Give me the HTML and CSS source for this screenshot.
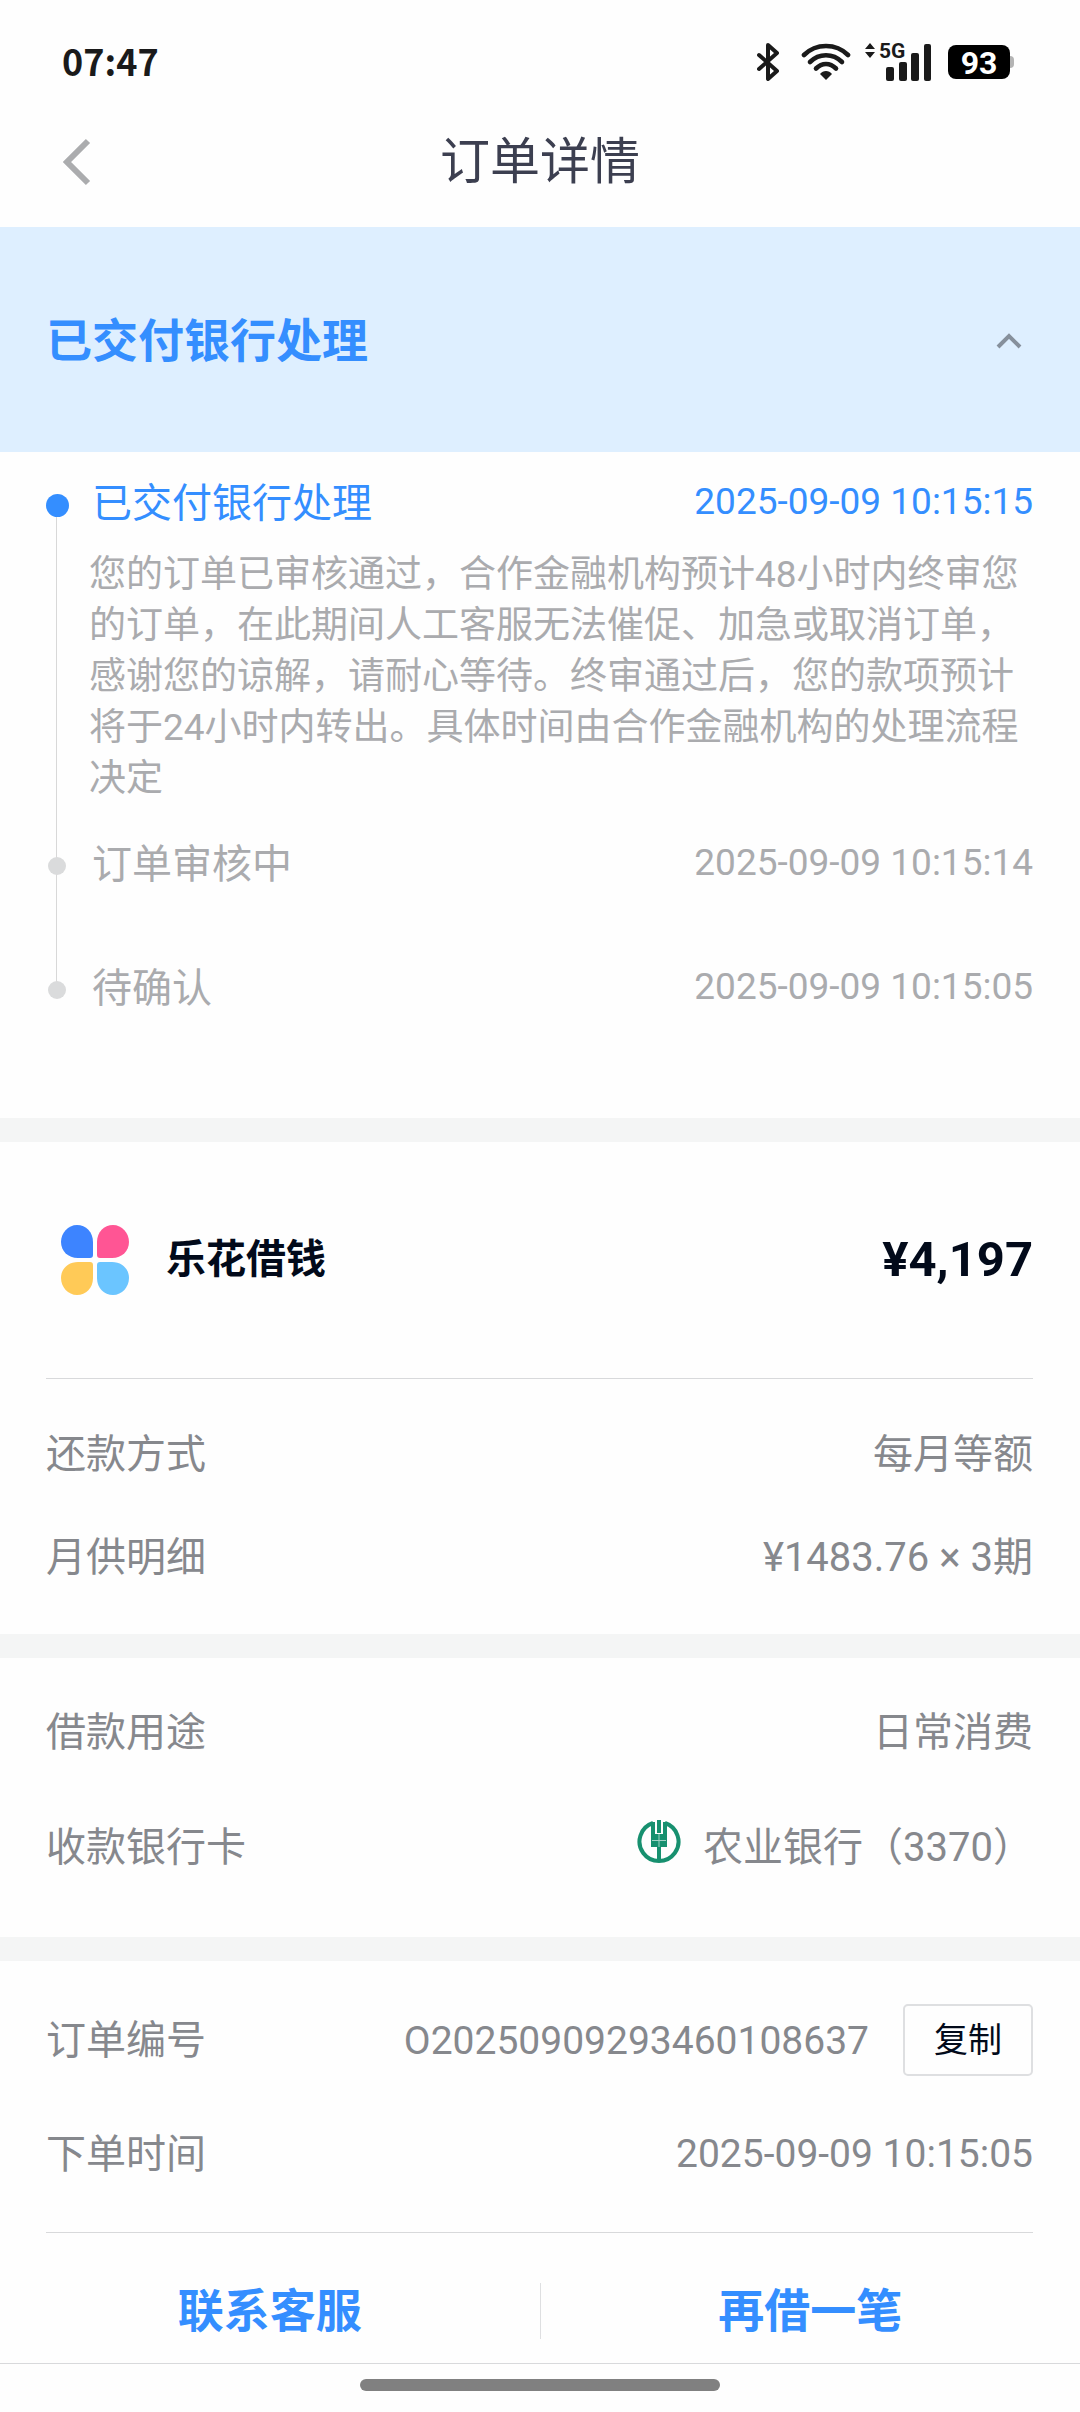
FILE: index.html
```html
<!DOCTYPE html>
<html lang="zh-CN">
<head>
<meta charset="utf-8">
<meta name="viewport" content="width=device-width, initial-scale=1">
<title>订单详情</title>
<link rel="stylesheet" href="styles.css">
</head>
<body>
<div class="status-bar">
  <span class="clock">07:47</span>
  <div class="status-icons">
    <svg class="icon-bluetooth" viewBox="0 0 22 38" aria-hidden="true"><path d="M2 12l18 16-9 8V2l9 8L2 26" fill="none" stroke="#1a1a1a" stroke-width="4" stroke-linejoin="round" stroke-linecap="round"/></svg>
    <svg class="icon-wifi" viewBox="0 0 50 38" aria-hidden="true"><g fill="none" stroke="#1a1a1a" stroke-width="4.6" stroke-linecap="round"><path d="M3 12C15 0 35 0 47 12"/><path d="M9 19c9-9 23-9 32 0"/><path d="M15 25.500c6-6 14-6 20 0"/></g><path d="M25 37l-6-6c3-4 9-4 12 0z" fill="#1a1a1a"/></svg>
    <span class="network">
      <svg class="icon-signal" viewBox="0 0 68 38" aria-hidden="true"><g fill="#1a1a1a"><path d="M5 0l5 6H0zM5 15l5-6H0z"/><rect x="21" y="24" width="8" height="14" rx="2"/><rect x="34" y="19" width="8" height="19" rx="2"/><rect x="46" y="10" width="8" height="28" rx="2"/><rect x="59" y="1" width="7" height="37" rx="2"/></g></svg>
      <span class="network-type">5G</span>
    </span>
    <span class="battery">93</span>
  </div>
</div>

<header class="nav-bar">
  <button class="back" type="button" aria-label="返回"><svg viewBox="0 0 28 48" aria-hidden="true"><path d="M25 3L4 24l21 21" fill="none" stroke="#abacae" stroke-width="6"/></svg></button>
  <h1 class="nav-title">订单详情</h1>
</header>

<main>
  <section class="progress">
    <button class="progress-head" type="button" aria-expanded="true">
      <span>已交付银行处理</span>
      <svg class="chevron" viewBox="0 0 26 16" aria-hidden="true"><path d="M2 14L13 3l11 11" fill="none" stroke="#86909c" stroke-width="4"/></svg>
    </button>
    <ol class="timeline">
      <li class="step step-current">
        <div class="step-row"><span class="step-name">已交付银行处理</span><time>2025-09-09 10:15:15</time></div>
        <p class="step-note">您的订单已审核通过，合作金融机构预计48小时内终审您的订单，在此期间人工客服无法催促、加急或取消订单，感谢您的谅解，请耐心等待。终审通过后，您的款项预计将于24小时内转出。具体时间由合作金融机构的处理流程决定</p>
      </li>
      <li class="step">
        <div class="step-row"><span class="step-name">订单审核中</span><time>2025-09-09 10:15:14</time></div>
      </li>
      <li class="step">
        <div class="step-row"><span class="step-name">待确认</span><time>2025-09-09 10:15:05</time></div>
      </li>
    </ol>
  </section>

  <section class="card">
    <div class="product">
      <svg class="product-logo" viewBox="0 0 70 72" aria-hidden="true"><path d="M17 1c9 0 16 7 16 17v13q0 3-3 3H18C8 34 1 27 1 18S8 1 17 1z" fill="#3d84ff"/><path d="M53 1c-9 0-16 7-16 17v13q0 3 3 3h12c10 0 17-7 17-16S62 1 53 1z" fill="#ff5594"/><path d="M17 71c9 0 16-7 16-17V41q0-3-3-3H18C8 38 1 45 1 54s7 17 16 17z" fill="#ffca57"/><path d="M53 71c-9 0-16-7-16-17V41q0-3 3-3h12c10 0 17 7 17 16s-7 17-16 17z" fill="#6bc5ff"/></svg>
      <h2 class="product-name">乐花借钱</h2>
      <strong class="amount">¥4,197</strong>
    </div>
    <dl class="facts facts-repay">
      <div class="fact"><dt>还款方式</dt><dd>每月等额</dd></div>
      <div class="fact"><dt>月供明细</dt><dd>¥1483.76 × 3期</dd></div>
    </dl>
  </section>

  <section class="card">
    <dl class="facts facts-usage">
      <div class="fact"><dt>借款用途</dt><dd>日常消费</dd></div>
      <div class="fact"><dt>收款银行卡</dt><dd class="bank">
        <svg class="bank-logo" viewBox="0 0 44 44" aria-hidden="true"><path d="M16 3a19.500 19.500 0 1 0 12 0" fill="none" stroke="#17906f" stroke-width="4"/><path d="M20 0h4v13h-4zM14 2h4v12h8V2h4v25h-6v14h-4V27h-6z" fill="#17906f"/><path d="M22 14v13M15 20.500h14" stroke="#fff" stroke-width="1" opacity=".6"/></svg>
        <span>农业银行（3370）</span></dd></div>
    </dl>
  </section>

  <section class="card">
    <dl class="facts facts-order">
      <div class="fact"><dt>订单编号</dt><dd class="order-no"><span>O20250909293460108637</span><button class="copy" type="button">复制</button></dd></div>
      <div class="fact"><dt>下单时间</dt><dd>2025-09-09 10:15:05</dd></div>
    </dl>
  </section>
</main>

<footer class="actions">
  <button class="action" type="button">联系客服</button>
  <button class="action" type="button">再借一笔</button>
</footer>
<div class="home-area"><span class="home-bar"></span></div>
</body>
</html>
```
FILE: styles.css
```css
* {
  box-sizing: border-box;
  margin: 0;
  padding: 0;
}

body {
  background: #fefefe;
  color: #86888d;
  font-family: Roboto, "Noto Sans CJK SC", sans-serif;
  font-size: 40px;
  line-height: 56px;
}

button {
  border: 0;
  background: none;
  color: inherit;
  font: inherit;
  cursor: pointer;
}

svg {
  display: block;
}

/* Status bar */
.status-bar {
  display: flex;
  align-items: center;
  justify-content: space-between;
  height: 96px;
  padding: 28px 70px 0 62px;
  color: #1a1a1a;
}

.clock {
  padding-bottom: 4px;
  font: 700 36px/40px "Noto Sans CJK SC", sans-serif;
}

.status-icons {
  display: flex;
  align-items: center;
}

.icon-bluetooth {
  width: 22px;
  height: 38px;
  margin-right: 22px;
}

.icon-wifi {
  width: 50px;
  height: 38px;
  margin-right: 14px;
}

.network {
  position: relative;
  margin-right: 15px;
}

.icon-signal {
  width: 68px;
  height: 38px;
}

.network-type {
  position: absolute;
  top: -1px;
  left: 14px;
  font: 700 21px/18px Roboto, sans-serif;
}

.battery {
  position: relative;
  width: 62px;
  height: 34px;
  border-radius: 8px;
  background: #000;
  color: #fff;
  font: 700 32px/36px Roboto, sans-serif;
  text-align: center;
}

.battery::after {
  content: "";
  position: absolute;
  top: 11px;
  right: -4px;
  width: 4px;
  height: 12px;
  border-radius: 0 4px 4px 0;
  background: #b4b4b4;
}

/* Title bar */
.nav-bar {
  display: grid;
  grid-template-columns: 1fr auto 1fr;
  align-items: center;
  height: 131px;
  padding: 0 63px;
}

.back {
  justify-self: start;
}

.back svg {
  width: 28px;
  height: 48px;
}

.nav-title {
  color: #3c3f50;
  font-size: 50px;
  font-weight: 400;
}

/* Order progress */
.progress-head {
  display: flex;
  align-items: center;
  justify-content: space-between;
  width: 100%;
  height: 225px;
  padding: 2px 58px 0 46px;
  background: #deefff;
  color: #348eff;
  font-size: 46px;
  font-weight: 700;
}

.chevron {
  width: 26px;
  height: 16px;
}

.timeline {
  padding: 24px 47px 99px 46px;
  list-style: none;
}

.step {
  position: relative;
  padding: 2px 0 66px 46px;
  color: #aaabae;
}

.step:last-child {
  padding-bottom: 2px;
}

.step::before {
  content: "";
  position: absolute;
  z-index: 1;
  top: 22px;
  left: 2px;
  width: 18px;
  height: 18px;
  border-radius: 50%;
  background: #dadbdc;
}

.step::after {
  content: "";
  position: absolute;
  top: 30px;
  bottom: -30px;
  left: 10px;
  width: 1px;
  background: #d8d8d8;
}

.step:last-child::after {
  display: none;
}

.step-current {
  padding-top: 0;
  padding-bottom: 31px;
}

.step-current::before {
  top: 18px;
  left: 0;
  width: 23px;
  height: 23px;
  background: #348eff;
}

.step-row {
  display: flex;
  justify-content: space-between;
}

.step-current .step-row {
  color: #348eff;
}

.step time {
  font-size: 37px;
  line-height: 52px;
}

.step-note {
  margin: 17px 0 0 -3px;
  font-size: 37px;
  line-height: 51px;
}

/* Detail cards */
.card {
  padding: 0 47px 0 46px;
  border-top: 24px solid #f4f5f5;
}

.product {
  display: flex;
  align-items: center;
  height: 237px;
  padding-left: 14px;
  border-bottom: 1px solid #d8d9db;
  color: #020a1a;
}

.product-logo {
  width: 70px;
  height: 72px;
  margin-right: 36px;
}

.product-name {
  font-size: 40px;
  font-weight: 700;
}

.amount {
  margin-left: auto;
  font-size: 49px;
}

.facts {
  display: flex;
  flex-direction: column;
}

.facts-repay {
  gap: 47px;
  padding: 48px 0;
}

.facts-usage {
  gap: 59px;
  padding: 47px 0 61px;
}

.facts-order {
  gap: 49px;
  padding: 43px 0 49px;
  border-bottom: 1px solid #d8d9db;
}

.fact {
  display: flex;
  align-items: center;
  justify-content: space-between;
}

.facts-order dd {
  font-size: 39px;
}

.bank {
  display: flex;
  align-items: center;
  gap: 22px;
}

.bank-logo {
  width: 44px;
  height: 44px;
  margin-bottom: 12px;
}

.order-no {
  display: flex;
  align-items: center;
  gap: 34px;
}

.order-no span,
.facts-order dt {
  padding-top: 2px;
}

.copy {
  height: 72px;
  padding: 0 29px;
  border: 2px solid #dedfe1;
  border-radius: 5px;
  color: #020a1a;
  font-size: 34px;
}

/* Bottom actions */
.actions {
  display: flex;
  align-items: center;
  height: 131px;
  padding-top: 26px;
  border-bottom: 1px solid #d8d9db;
}

.action {
  flex: 1;
  color: #348eff;
  font-size: 46px;
  font-weight: 700;
}

.action + .action {
  border-left: 1px solid #dedfe1;
}

.home-area {
  padding: 15px 0 20px;
}

.home-bar {
  display: block;
  width: 33.33%;
  height: 12px;
  margin: 0 auto;
  border-radius: 6px;
  background: #808080;
}
```
